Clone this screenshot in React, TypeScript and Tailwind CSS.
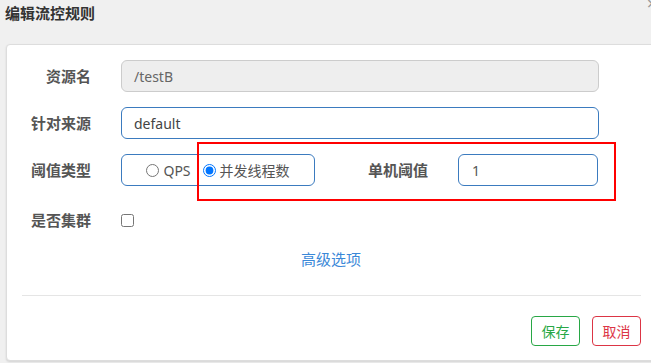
import React from "react";

const Label = ({ text }: { text: string }) => (
  <div className="w-[84px] shrink-0 text-right text-[15px] font-bold text-[#555] leading-[20px]">{text}</div>
);

export default function App() {
  return (
    <div className="relative w-[651px] h-[363px] overflow-hidden bg-[#f0f0f0] font-['Noto_Sans','Noto_Sans_CJK_SC',sans-serif]">
      {/* header */}
      <div className="h-[44px] pl-[5px] pt-[3px]">
        <div className="text-[15px] font-bold leading-[20px] text-[#333]">编辑流控规则</div>
      </div>
      <span className="absolute right-[-6px] top-[-6px] text-[18px] leading-none text-[#999]">×</span>

      {/* panel */}
      <div className="ml-[6px] w-[670px] h-[317px] bg-white border border-[#ddd] rounded-[4px] shadow-[0_1px_2px_rgba(0,0,0,0.12)] pt-[15px]">
        <div className="flex flex-col gap-[15px]">
          <div className="flex items-center h-[32px]">
            <Label text="资源名" />
            <div className="ml-[30px] w-[478px] h-[32px] flex items-center pl-[12px] bg-[#eee] border border-[#ccc] rounded-[6px] text-[14px] text-[#666]">
              /testB
            </div>
          </div>

          <div className="flex items-center h-[32px]">
            <Label text="针对来源" />
            <div className="ml-[30px] w-[478px] h-[32px] flex items-center pl-[12px] border border-[#3b7bbf] rounded-[6px] text-[14px] text-[#444]">
              default
            </div>
          </div>

          <div className="flex items-center h-[32px]">
            <Label text="阈值类型" />
            <div className="ml-[30px] w-[194px] h-[32px] flex items-center justify-center border border-[#3b7bbf] rounded-[6px] text-[14px] text-[#555]">
              <label className="flex items-center">
                <input type="radio" name="grade" className="m-0 w-[13px] h-[13px]" readOnly />
                <span className="ml-[4px]">QPS</span>
              </label>
              <label className="flex items-center ml-[12px]">
                <input type="radio" name="grade" className="m-0 w-[13px] h-[13px]" defaultChecked />
                <span className="ml-[4px]">并发线程数</span>
              </label>
            </div>
            <div className="ml-[53px] text-[15px] font-bold text-[#555] leading-[20px]">单机阈值</div>
            <div className="ml-[30px] w-[140px] h-[32px] flex items-center pl-[13px] border border-[#3b7bbf] rounded-[6px] text-[14px] text-[#555]">
              1
            </div>
          </div>

          <div className="flex items-center h-[32px] mt-[3px]">
            <Label text="是否集群" />
            <input type="checkbox" className="ml-[30px] m-0 w-[13px] h-[13px]" />
          </div>
        </div>

        <div className="mt-[13px] w-[651px] text-center text-[15px] leading-[20px] text-[#3a88d8] pr-[3px]">高级选项</div>

        <div className="ml-[15px] w-[619px] mt-[26px] border-t border-[#e5e5e5]" />

        <div className="ml-[15px] w-[619px] mt-[20px] flex justify-end gap-[12px]">
          <button className="w-[49px] h-[30px] rounded-[4px] border border-[#28a745] text-[14px] text-[#28a745] bg-white">保存</button>
          <button className="w-[49px] h-[30px] rounded-[4px] border border-[#dc3545] text-[14px] text-[#dc3545] bg-white">取消</button>
        </div>
      </div>

      {/* red annotation box */}
      <div className="absolute left-[197px] top-[142px] w-[419px] h-[59px] border-2 border-[#ff0000]" />
    </div>
  );
}
